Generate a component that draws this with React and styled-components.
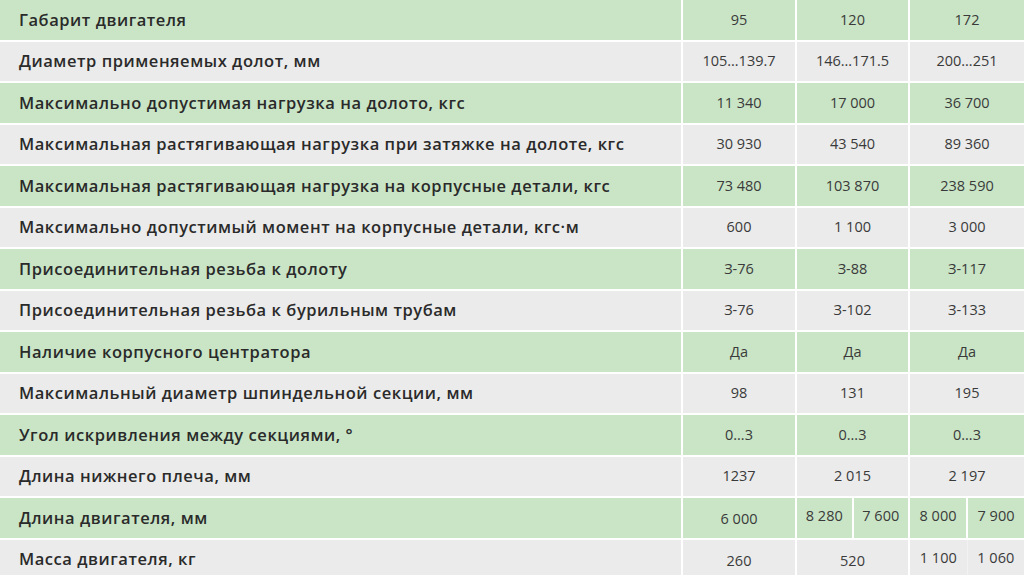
import styled, { createGlobalStyle } from 'styled-components';

const GlobalStyle = createGlobalStyle`
  html, body {
    margin: 0;
    padding: 0;
    background: #ffffff;
    overflow: hidden;
  }
`;

const GREEN = '#c9e5c6';
const GRAY = '#ebebeb';

const Table = styled.div`
  display: flex;
  flex-direction: column;
  gap: 2px;
  width: 1024px;
  height: 575px;
  overflow: hidden;
  background: #ffffff;
  font-family: "Open Sans", "Noto Sans", sans-serif;
  color: #2a2a2a;
`;

const Row = styled.div`
  display: grid;
  grid-template-columns: 681px 112px 111px 1fr;
  column-gap: 2px;
  height: 39.5px;
  flex: 0 0 39.5px;
`;

const Cell = styled.div`
  background: ${({ $tone }) => ($tone === 'green' ? GREEN : GRAY)};
  display: flex;
  align-items: center;
`;

const Label = styled(Cell)`
  padding-left: 19px;
  padding-bottom: 1px;
  font-size: 16.5px;
  font-weight: 600;
  letter-spacing: 0.55px;
  white-space: nowrap;
`;

const Value = styled(Cell)`
  justify-content: center;
  font-size: 14.5px;
  font-weight: 400;
  color: #3a3a3a;
  padding-top: ${({ $shift }) => ($shift ? '2px' : '0')};
  padding-bottom: ${({ $shift }) => ($shift ? '0' : '1px')};
`;

const Split = styled.div`
  display: grid;
  grid-template-columns: 1fr 1fr;
  column-gap: ${({ $faint }) => ($faint ? '1px' : '2px')};
  background: ${({ $faint }) => ($faint ? '#f2f2f2' : '#ffffff')};
`;

const SubValue = styled(Cell)`
  justify-content: center;
  font-size: 14.5px;
  color: #3a3a3a;
  padding-bottom: 4px;
`;

const n = (s) => s.replace(/ /g, '\u00a0');

const rows = [
  ['Габарит двигателя', ['95', '120', '172']],
  ['Диаметр применяемых долот, мм', ['105…139.7', '146…171.5', '200…251']],
  ['Максимально допустимая нагрузка на долото, кгс', ['11 340', '17 000', '36 700']],
  ['Максимальная растягивающая нагрузка при затяжке на долоте, кгс', ['30 930', '43 540', '89 360']],
  ['Максимальная растягивающая нагрузка на корпусные детали, кгс', ['73 480', '103 870', '238 590']],
  ['Максимально допустимый момент на корпусные детали, кгс·м', ['600', '1 100', '3 000']],
  ['Присоединительная резьба к долоту', ['З-76', 'З-88', 'З-117']],
  ['Присоединительная резьба к бурильным трубам', ['З-76', 'З-102', 'З-133']],
  ['Наличие корпусного центратора', ['Да', 'Да', 'Да']],
  ['Максимальный диаметр шпиндельной секции, мм', ['98', '131', '195']],
  ['Угол искривления между секциями, °', ['0…3', '0…3', '0…3']],
  ['Длина нижнего плеча, мм', ['1237', '2 015', '2 197']],
  ['Длина двигателя, мм', ['6 000', ['8 280', '7 600'], ['8 000', '7 900']]],
  ['Масса двигателя, кг', ['260', '520', ['1 100', '1 060']], true],
];

function SpecRow({ label, values, tone, faint }) {
  const hasSplit = values.some((v) => Array.isArray(v));
  return (
    <Row>
      <Label $tone={tone}>{label}</Label>
      {values.map((v, i) =>
        Array.isArray(v) ? (
          <Split key={i} $faint={faint}>
            {v.map((s, j) => (
              <SubValue key={j} $tone={tone}>{n(s)}</SubValue>
            ))}
          </Split>
        ) : (
          <Value key={i} $tone={tone} $shift={hasSplit}>{n(v)}</Value>
        )
      )}
    </Row>
  );
}

export default function App() {
  return (
    <>
      <GlobalStyle />
      <Table>
        {rows.map(([label, values, faint], i) => (
          <SpecRow
            key={label}
            label={label}
            values={values}
            faint={faint}
            tone={i % 2 === 0 ? 'green' : 'gray'}
          />
        ))}
      </Table>
    </>
  );
}
